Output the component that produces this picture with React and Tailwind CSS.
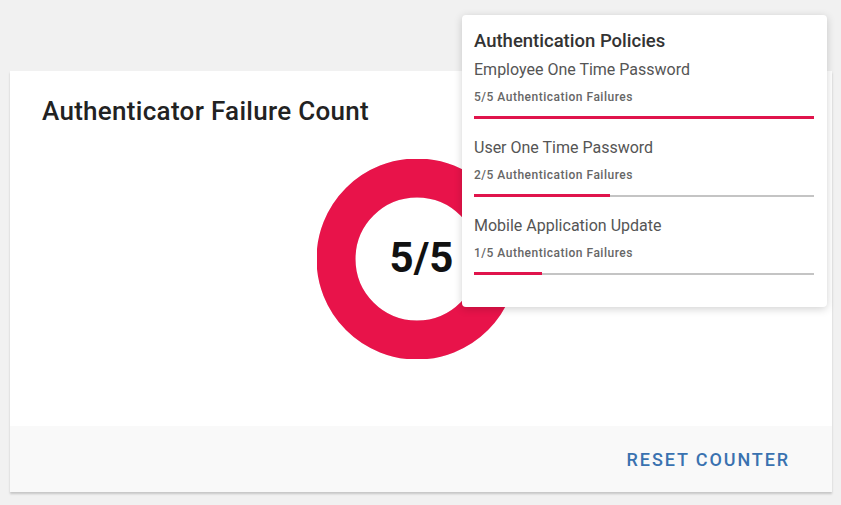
import React from 'react';

const policies = [
  { name: 'Employee One Time Password', failures: 5 },
  { name: 'User One Time Password', failures: 2 },
  { name: 'Mobile Application Update', failures: 1 },
];

const MAX_FAILURES = 5;

function Donut({ value, max }) {
  const r = 81;
  const c = 2 * Math.PI * r;
  const filled = (value / max) * c;
  return (
    <div className="relative w-[200px] h-[200px]">
      <svg width="200" height="200" viewBox="0 0 200 200">
        <circle cx="100" cy="100" r={r} fill="none" stroke="#e5e5e5" strokeWidth="39" />
        <circle
          cx="100"
          cy="100"
          r={r}
          fill="none"
          stroke="#e8134a"
          strokeWidth="39"
          strokeDasharray={`${filled} ${c}`}
          transform="rotate(-90 100 100)"
        />
      </svg>
      <div className="absolute inset-0 flex items-center justify-center pl-[9px] pb-[4px] text-[42px] font-bold text-[#111]">
        {value}/{max}
      </div>
    </div>
  );
}

function PolicyRow({ policy }) {
  const pct = (policy.failures / MAX_FAILURES) * 100;
  return (
    <div className="flex flex-col">
      <div className="text-[16px] leading-[20px] text-[#555]">{policy.name}</div>
      <div className="mt-[10px] text-[12px] leading-[14px] font-medium tracking-[0.5px] text-[#666]">
        {policy.failures}/{MAX_FAILURES} Authentication Failures
      </div>
      <div className="mt-[12px] h-[3px] w-full flex items-center">
        <div className="h-[3px] bg-[#e0144c]" style={{ width: `${pct}%` }} />
        <div className="h-[2px] flex-1 bg-[#c4c4c4]" />
      </div>
    </div>
  );
}

export default function App() {
  return (
    <div
      className="relative w-[841px] h-[505px] bg-[#f1f1f1] overflow-hidden"
      style={{ fontFamily: 'Roboto, "Liberation Sans", sans-serif' }}
    >
      <div className="pt-[71px] pl-[10px]">
        <div className="w-[822px] bg-white shadow-[0_2px_2px_rgba(0,0,0,0.18)] flex flex-col">
          <div className="h-[355px] px-[32px] pt-[25px] flex flex-col">
            <h2 className="text-[26px] leading-[30px] font-medium tracking-[0.3px] text-[#222]">
              Authenticator Failure Count
            </h2>
            <div className="mt-[33px] flex justify-center pr-[8px]">
              <Donut value={5} max={5} />
            </div>
          </div>
          <div className="h-[66px] bg-[#f9f9f9] flex items-center justify-end pr-[42px]">
            <button className="text-[18px] font-medium tracking-[1.9px] text-[#3a72b0] pt-[1px]">
              RESET COUNTER
            </button>
          </div>
        </div>
      </div>

      <div className="absolute left-[462px] top-[15px] w-[365px] h-[292px] bg-white rounded-[4px] shadow-[0_2px_8px_rgba(0,0,0,0.18)] px-[12px] pt-[14px]">
        <div className="text-[18.5px] leading-[24px] font-medium text-[#333]">Authentication Policies</div>
        <div className="mt-[7px] pr-[1px] flex flex-col gap-[19px]">
          {policies.map((p) => (
            <PolicyRow key={p.name} policy={p} />
          ))}
        </div>
      </div>
    </div>
  );
}
